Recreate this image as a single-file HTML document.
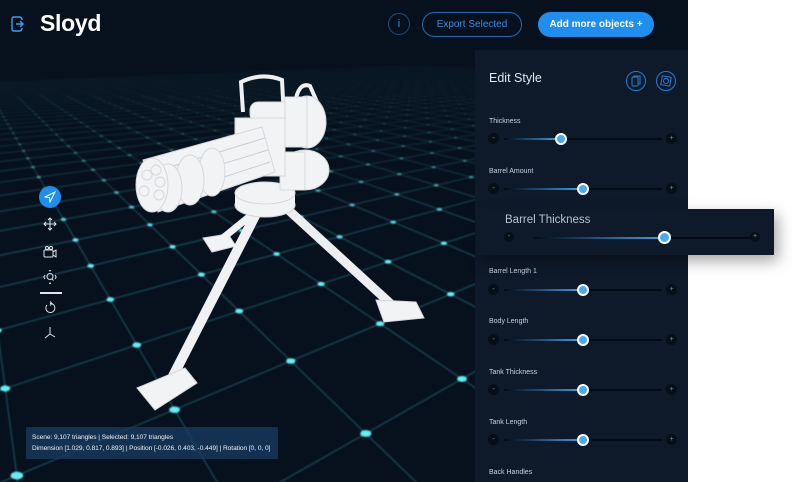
<!DOCTYPE html>
<html><head><meta charset="utf-8"><style>
*{margin:0;padding:0;box-sizing:border-box}
html,body{width:800px;height:482px;overflow:hidden}
body{background:#fff;font-family:"Liberation Sans",sans-serif;position:relative}
#app{position:absolute;left:0;top:0;width:688px;height:482px;background:#07111d;overflow:hidden}
#wrap{position:absolute;left:0;top:0;width:800px;height:482px;overflow:hidden}
.abs{position:absolute}
.panel{left:475px;top:50px;width:213px;height:432px;background:#0e1a2a}
.c{position:absolute;top:0;width:12px;height:12px;border-radius:50%;background:#060e18;color:#8894a2;font-size:7px;line-height:12px;text-align:center}
.tr{position:absolute;top:5px;height:2px;background:#050b14}
.fill{position:absolute;top:5px;height:2px;background:linear-gradient(90deg,rgba(40,140,230,0),#3aa0f0)}
.th{position:absolute;top:0;width:12px;height:12px;border-radius:50%;background:#4aa8f5;border:2px solid #fff}
.tb{position:absolute;left:43px;width:14px;height:14px}
</style></head><body>
<div id="wrap">
<div id="app">
<svg id="g" class="abs" style="left:0;top:0" width="688" height="482"></svg>
<svg class="abs" style="left:0;top:0" width="688" height="482">
<defs><linearGradient id="fd" x1="0" y1="0" x2="0" y2="1"><stop offset="0.1" stop-color="#07111d" stop-opacity="1"/><stop offset="0.25" stop-color="#07111d" stop-opacity="0.75"/><stop offset="0.5" stop-color="#07111d" stop-opacity="0"/></linearGradient></defs>
<rect width="688" height="482" fill="url(#fd)"/>
<g fill="#f2f3f5" stroke="#d5d8dc" stroke-width="1">
<polygon points="203,238 228,234 236,246 212,252"/>
<line x1="255" y1="212" x2="218" y2="242" stroke="#f2f3f5" stroke-width="7"/>
<line x1="283" y1="205" x2="392" y2="305" stroke="#eceef0" stroke-width="9"/>
<polygon points="376,300 416,302 424,318 384,322"/>
<line x1="258" y1="210" x2="172" y2="378" stroke="#f0f1f3" stroke-width="10"/>
<polygon points="137,388 185,368 197,383 155,410"/>
<ellipse cx="265" cy="205" rx="30" ry="12"/>
<rect x="235" y="193" width="60" height="12" stroke="none"/>
<ellipse cx="265" cy="193" rx="30" ry="11"/>
<path d="M243,112 L241,82 Q262,72 282,80 L284,118" fill="none" stroke="#eef0f2" stroke-width="4"/>
<path d="M296,98 Q300,82 310,86 L318,104" fill="none" stroke="#eef0f2" stroke-width="4"/>
<rect x="250" y="102" width="45" height="20" rx="8"/>
<ellipse cx="307" cy="122" rx="19" ry="26"/>
<rect x="285" y="97" width="22" height="50"/>
<ellipse cx="305" cy="170" rx="24" ry="20"/>
<rect x="280" y="152" width="25" height="38"/>
<rect x="235" y="118" width="50" height="58"/>
<polygon points="143,160 262,127 275,172 158,212"/>
<g stroke="#c8ccd2"><line x1="160" y1="170" x2="265" y2="138"/><line x1="163" y1="182" x2="268" y2="150"/><line x1="166" y1="196" x2="270" y2="162"/></g>
<ellipse cx="212" cy="172" rx="13" ry="24"/>
<ellipse cx="190" cy="180" rx="14" ry="25"/>
<ellipse cx="168" cy="188" rx="14" ry="24"/>
<ellipse cx="152" cy="185" rx="16" ry="27"/>
<circle cx="147" cy="175" r="5"/><circle cx="156" cy="170" r="5"/><circle cx="144" cy="191" r="5"/><circle cx="159" cy="195" r="5"/><circle cx="160" cy="182" r="5"/>
</g>
</svg>
<svg class="abs" style="left:11px;top:16px" width="14" height="16" viewBox="0 0 14 16" fill="none" stroke="#3aa0f0" stroke-width="1.4"><path d="M8,1 H3 Q1,1 1,3 V13 Q1,15 3,15 H8"/><path d="M5,8 H12 M9,5 L12,8 L9,11"/><path d="M8,1 Q11,1 11,4 M8,15 Q11,15 11,12"/></svg>
<div class="abs" style="left:40px;top:10px;font-size:23px;font-weight:bold;color:#fff;letter-spacing:-0.3px">Sloyd</div>
<div class="abs" style="left:388px;top:13px;width:22px;height:22px;border:1px solid #1d4d7e;border-radius:50%;color:#3a8fe0;font-size:11px;text-align:center;line-height:20px">i</div>
<div class="abs" style="left:422px;top:12px;width:100px;height:25px;border:1px solid #1f6cb4;border-radius:13px;color:#2b8fe8;font-size:10px;text-align:center;line-height:23px">Export Selected</div>
<div class="abs" style="left:538px;top:12px;width:116px;height:25px;background:#1f8fef;border-radius:13px;color:#fff;font-size:10px;font-weight:bold;text-align:center;line-height:25px">Add more objects +</div>
<div class="abs" style="left:39px;top:186px;width:22px;height:22px;border-radius:50%;background:#1f8fef"></div>
<svg class="abs" style="left:44px;top:191px" width="12" height="12" viewBox="0 0 12 12" fill="none" stroke="#fff" stroke-width="1"><path d="M1,6 L11,1 L6,11 L5.5,6.5 Z"/></svg>
<svg class="tb" style="top:217px" viewBox="0 0 14 14" fill="none" stroke="#dfe4ea" stroke-width="1"><path d="M7,1 V13 M1,7 H13 M5,3 L7,1 L9,3 M5,11 L7,13 L9,11 M3,5 L1,7 L3,9 M11,5 L13,7 L11,9"/></svg>
<svg class="tb" style="top:245px" viewBox="0 0 14 14" fill="none" stroke="#dfe4ea" stroke-width="1"><rect x="1" y="5" width="9" height="7" rx="1"/><path d="M10,7 L13,5 V12 L10,10"/><circle cx="4" cy="3" r="1.5"/><circle cx="8" cy="3" r="1.5"/></svg>
<svg class="tb" style="top:270px" viewBox="0 0 14 14" fill="none" stroke="#dfe4ea" stroke-width="1"><circle cx="7" cy="6.5" r="3"/><path d="M9,9 L10.5,10.5 M2,5 L0.8,7 L2,9 M12,5 L13.2,7 L12,9 M6,1 L7,0.5 L8,1 M6,13 L7,13.5 L8,13"/></svg>
<div class="abs" style="left:40px;top:292px;width:22px;height:1.5px;background:#dfe4ea"></div>
<svg class="tb" style="top:301px" viewBox="0 0 14 14" fill="none" stroke="#dfe4ea" stroke-width="1"><path d="M4,4 A4.5,4.5 0 1 0 7,2.5"/><path d="M7,0.5 L9,2.5 L7,4.5"/></svg>
<svg class="tb" style="top:326px" viewBox="0 0 14 14" fill="none" stroke="#dfe4ea" stroke-width="1"><path d="M7,1 V8 L2,12 M7,8 L12,11"/></svg>
<div class="abs" style="left:26px;top:427px;width:252px;height:32px;background:rgba(25,60,100,0.75);color:#eef2f6;font-size:6.6px;line-height:11px;padding:5px 6px;white-space:nowrap;letter-spacing:-0.05px">Scene: 9,107 triangles | Selected: 9,107 triangles<br>Dimension [1.029, 0.817, 0.893] | Position [-0.026, 0.403, -0.449] | Rotation [0, 0, 0]</div>
<div class="abs panel">
<div class="abs" style="left:14px;top:21px;font-size:12.5px;color:#e1e7ee">Edit Style</div>
<svg class="abs" style="left:151px;top:21px" width="20" height="20" viewBox="0 0 20 20" fill="none" stroke="#1f7fd6" stroke-width="1"><circle cx="10" cy="10" r="9.5"/><rect x="6" y="6" width="6" height="9" rx="1"/><path d="M8,6 V5 H14 V13 H12"/></svg>
<svg class="abs" style="left:181px;top:21px" width="20" height="20" viewBox="0 0 20 20" fill="none" stroke="#1f7fd6" stroke-width="1"><circle cx="10" cy="10" r="9.5"/><rect x="5.5" y="5.5" width="9" height="9" transform="rotate(10 10 10)"/><circle cx="10" cy="10" r="2.5"/></svg>
</div>
</div>
<div id="sliders"></div>
<div class="abs" style="left:476px;top:209px;width:298px;height:46px;background:#0e1a2a;box-shadow:4px 6px 14px rgba(0,0,0,0.35)">
<div class="abs" style="left:29px;top:5px;font-size:11.5px;color:#b8c3cf">Barrel Thickness</div>
<div class="abs" style="left:28px;top:23px;width:258px;height:12px">
<div class="c" style="left:0;width:10px;height:10px;line-height:10px">-</div>
<div class="tr" style="left:30px;width:216px"></div>
<div class="fill" style="left:30px;width:130px"></div>
<div class="th" style="left:154px;width:13px;height:13px;top:-1px"></div>
<div class="c" style="left:246px;width:10px;height:10px;line-height:10px">+</div>
</div></div>
</div>
<script>
(function(){
var g=document.getElementById('g');
var hy=40,f=520,h=1.5,s=0.55,a=0.62,cx=330,ox=0.2;
function P(u,v){var X=u*Math.cos(a)-v*Math.sin(a)+ox,Z=u*Math.sin(a)+v*Math.cos(a);return [X,Z];}
function pr(p){return [cx+f*p[0]/p[1],hy+f*h/p[1]];}
var zmin=0.6,N=40,out='';
function seg(p1,p2){if(p1[1]<zmin&&p2[1]<zmin)return;
if(p1[1]<zmin){var t=(zmin-p1[1])/(p2[1]-p1[1]);p1=[p1[0]+t*(p2[0]-p1[0]),zmin];}
if(p2[1]<zmin){var t=(zmin-p2[1])/(p1[1]-p2[1]);p2=[p2[0]+t*(p1[0]-p2[0]),zmin];}
var A=pr(p1),B=pr(p2);out+='<line x1="'+A[0].toFixed(1)+'" y1="'+A[1].toFixed(1)+'" x2="'+B[0].toFixed(1)+'" y2="'+B[1].toFixed(1)+'" stroke="#1e5162" stroke-width="1.1"/>';}
for(var i=-N;i<=N;i++){seg(P(i*s,-N*s),P(i*s,N*s));seg(P(-N*s,i*s),P(N*s,i*s));}
for(var i=-N;i<=N;i++)for(var j=-N;j<=N;j++){var p=P(i*s,j*s);if(p[1]<zmin||p[1]>14)continue;var q=pr(p);if(q[0]<-10||q[0]>700||q[1]>490)continue;var r=8/p[1];
out+='<ellipse cx="'+q[0].toFixed(1)+'" cy="'+q[1].toFixed(1)+'" rx="'+(r*1.4).toFixed(2)+'" ry="'+(r*0.85).toFixed(2)+'" fill="#5ff0f5"/>';}
g.innerHTML='<defs><filter id="bl"><feGaussianBlur stdDeviation="0.9"/></filter></defs><g filter="url(#bl)">'+out+'</g>';
})();
(function(){
var rows=[["Thickness",123,139,560],["Barrel Amount",173,189,582],["Barrel Length 1",273,290,582],["Body Length",323,340,582],["Tank Thickness",374,390,582],["Tank Length",424,440,582],["Back Handles",474,-1,0]];
var h='';
rows.forEach(function(r){h+='<div class="abs" style="left:489px;top:'+(r[1]-5)+'px;font-size:7px;line-height:8px;color:#c9d2dc">'+r[0]+'</div>';
if(r[2]>0){var y=r[2]-6;h+='<div class="c" style="left:488px;top:'+y+'px;width:11px;height:11px;line-height:11px;position:absolute">-</div>'+
'<div class="tr" style="left:504px;top:'+(y+5)+'px;width:158px;position:absolute"></div>'+
'<div class="fill" style="left:504px;top:'+(y+5)+'px;width:'+(r[3]-504)+'px;position:absolute"></div>'+
'<div class="th" style="left:'+(r[3]-5)+'px;top:'+(y-0.5)+'px;position:absolute"></div>'+
'<div class="c" style="left:666px;top:'+y+'px;width:11px;height:11px;line-height:11px;position:absolute">+</div>';}});
document.getElementById('sliders').innerHTML=h;
})();
</script>
</body></html>
